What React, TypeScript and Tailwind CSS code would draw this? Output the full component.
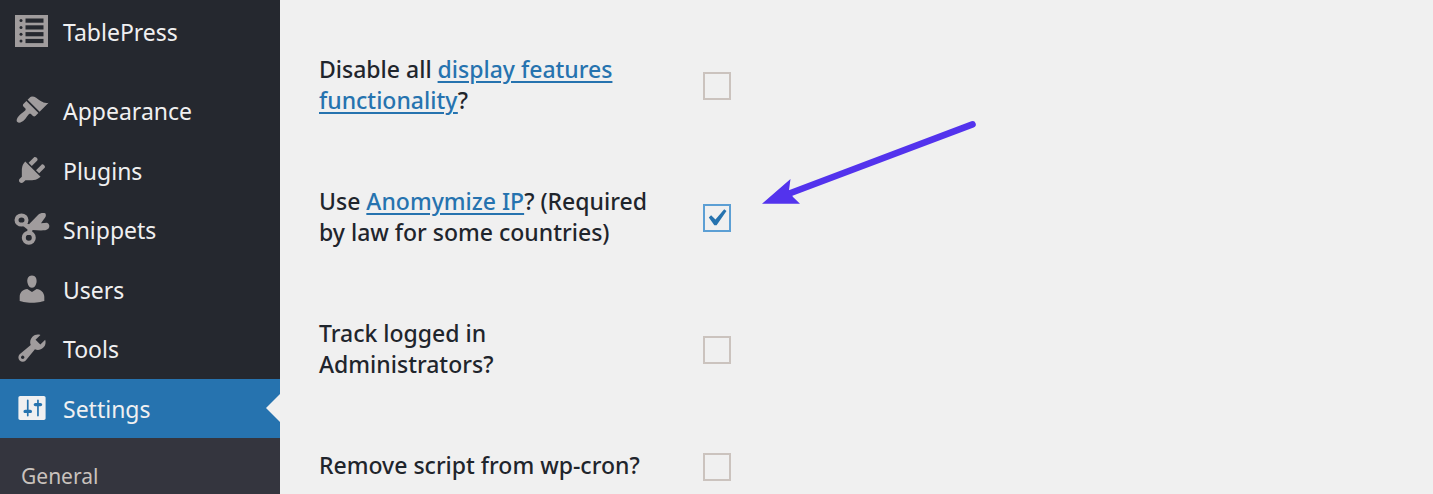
import { useState, type ReactNode } from "react";

function Dashicon({ d }: { d: string }) {
  return (
    <svg viewBox="0 0 20 20" className="size-[34px]" fill="currentColor" aria-hidden="true">
      <path d={d} />
    </svg>
  );
}

function TableIcon() {
  return (
    <svg viewBox="0 0 34 34" className="size-[34px]" aria-hidden="true">
      <rect x="0" y="1" width="33" height="32" fill="currentColor" />
      <g fill="#25282f">
        {[4.5, 11.3, 18.1, 24.9].map((y) => (
          <g key={y}>
            <circle cx="6" cy={y + 2.1} r="1.5" />
            <rect x="10.5" y={y} width="18" height="4.2" />
          </g>
        ))}
      </g>
    </svg>
  );
}

function ScissorsIcon() {
  return (
    <svg viewBox="0 0 36 34" className="h-[34px] w-9" aria-hidden="true">
      <g fill="none" stroke="currentColor" strokeWidth="4">
        <ellipse cx="7.500" cy="8" rx="5" ry="4.600" />
        <circle cx="14.800" cy="25.800" r="5" />
      </g>
      <path
        fill="currentColor"
        d="M10 10.500 15 12.300 24 3C26 1 29.500 .5 31.500 1.500 32.500 3.500 31.500 5.500 30 7L27 11.200 33 10.800C35.500 12 36 14.500 34.500 16.600 33 18.500 30 18.500 27 18.500L18.500 18 17.500 23 12.500 23 13.500 17.500 8.500 13.500Z"
      />
    </svg>
  );
}

const icons = {
  appearance:
    "M14.48 11.06L7.41 3.99l1.5-1.5c.5-.56 2.3-.47 3.51.32 1.21.8 1.43 1.28 2.91 2.1 1.18.64 2.45 1.26 4.45.85zm-.71.71L6.7 4.7 4.93 6.47c-.39.39-.39 1.02 0 1.41l1.06 1.06c.39.39.39 1.03 0 1.42-.6.6-1.43 1.11-2.21 1.69-.35.26-.7.53-1.01.84C1.43 14.23.4 16.08 1.4 17.07c.99 1 2.84-.03 4.18-1.36.31-.31.58-.66.85-1.02.57-.78 1.08-1.61 1.69-2.21.39-.39 1.02-.39 1.41 0l1.06 1.06c.39.39 1.02.39 1.41 0z",
  plugins:
    "M13.11 4.36L9.87 7.6 8 5.73l3.24-3.24c.35-.34 1.05-.2 1.56.32.52.51.66 1.21.31 1.55zm-8 1.77l.91-1.12 9.01 9.01-1.19.84c-.71.71-2.63 1.16-3.82 1.16H6.14L4.9 17.26c-.59.59-1.54.59-2.12 0-.59-.58-.59-1.53 0-2.12l1.24-1.24v-3.88c0-1.13.4-3.19 1.09-3.89zm7.26 3.97l3.24-3.24c.34-.35 1.04-.21 1.55.31.52.51.66 1.21.31 1.55l-3.24 3.25z",
  users:
    "M10 9.25c-2.27 0-2.73-3.44-2.73-3.44C7 4.02 7.82 2 9.97 2c2.16 0 2.98 2.02 2.71 3.81 0 0-.41 3.44-2.68 3.44zm0 2.57L12.72 10c2.39 0 4.52 2.33 4.52 4.53v2.49s-3.65 1.13-7.24 1.13c-3.65 0-7.24-1.13-7.24-1.13v-2.49c0-2.25 1.94-4.48 4.47-4.48z",
  tools:
    "M16.68 9.77c-1.34 1.34-3.3 1.67-4.95.99l-5.41 6.52c-.99.99-2.59.99-3.58 0s-.99-2.59 0-3.57l6.52-5.42c-.68-1.65-.35-3.61.99-4.95 1.28-1.28 3.12-1.62 4.72-1.06l-2.89 2.89 2.82 2.82 2.86-2.87c.53 1.58.18 3.39-1.08 4.65zM3.81 16.21c.4.39 1.04.39 1.43 0 .4-.4.4-1.04 0-1.43-.39-.4-1.03-.4-1.43 0-.39.39-.39 1.03 0 1.43z",
  settings:
    "M18 16V4c0-.55-.45-1-1-1H3c-.55 0-1 .45-1 1v12c0 .55.45 1 1 1h14c.55 0 1-.45 1-1zM8 11h1c.55 0 1 .45 1 1s-.45 1-1 1H8v1.5c0 .28-.22.5-.5.5s-.5-.22-.5-.5V13H6c-.55 0-1-.45-1-1s.45-1 1-1h1V5.5c0-.28.22-.5.5-.5s.5.22.5.5V11zm5-2h-1c-.55 0-1-.45-1-1s.45-1 1-1h1V5.5c0-.28.22-.5.5-.5s.5.22.5.5V7h1c.55 0 1 .45 1 1s-.45 1-1 1h-1v5.5c0 .28-.22.5-.5.5s-.5-.22-.5-.5V9z",
};

function MenuLink({ icon, label, current }: { icon: ReactNode; label: string; current?: boolean }) {
  return (
    <a
      href="#"
      aria-current={current ? "page" : undefined}
      className={
        current
          ? "relative flex h-full items-center bg-[#2673af] text-[#f0f0f1]"
          : "relative flex h-full items-center text-[#f0f0f1]"
      }
    >
      <span
        className={
          current
            ? "flex w-[63px] justify-center pb-px text-[#f0f0f1]"
            : "flex w-[63px] justify-center pb-px text-[#a09c9d]"
        }
      >
        {icon}
      </span>
      <span className="pt-0.5">{label}</span>
      {current && (
        <svg viewBox="0 0 14 28" className="absolute right-0 h-7 w-3.5" aria-hidden="true">
          <path d="M14 0 0 14 14 28Z" fill="#f0f0f0" />
        </svg>
      )}
    </a>
  );
}

function Arrow() {
  return (
    <svg
      viewBox="0 0 240 110"
      className="pointer-events-none absolute -top-[94px] left-[47px] h-[110px] w-[240px]"
      aria-hidden="true"
    >
      <path d="M222.500 14.300 38 84" stroke="#5333ed" strokeWidth="6.600" strokeLinecap="round" />
      <path d="M12 93.800 40.500 69 39 80 43 87 50 93.800Z" fill="#5333ed" />
    </svg>
  );
}

function OptionRow({
  id,
  children,
  defaultChecked = false,
  pointed = false,
}: {
  id: string;
  children: ReactNode;
  defaultChecked?: boolean;
  pointed?: boolean;
}) {
  const [checked, setChecked] = useState(defaultChecked);
  return (
    <div className="flex items-center py-[35px]">
      <label htmlFor={id} className="w-96 shrink-0 pr-9 font-medium">
        {children}
      </label>
      <span className="relative mt-0.5 size-7 shrink-0">
        <input
          id={id}
          type="checkbox"
          checked={checked}
          onChange={(e) => setChecked(e.target.checked)}
          className="block size-7 appearance-none border-2 border-[#cbc3be] checked:border-[#5c9fd4]"
        />
        {checked && (
          <svg
            viewBox="0 0 20 20"
            className="pointer-events-none absolute -top-[3px] -left-[4px] size-[34px]"
            aria-hidden="true"
          >
            <path
              d="M14.83 4.89l1.34.94-5.81 8.38H9.02L5.78 9.67l1.34-1.25 2.57 2.4z"
              fill="#2673af"
            />
          </svg>
        )}
        {pointed && <Arrow />}
      </span>
    </div>
  );
}

function TextLink({ children }: { children: ReactNode }) {
  return (
    <a href="#" className="text-[#2673af] underline decoration-2 underline-offset-3">
      {children}
    </a>
  );
}

export default function App() {
  return (
    <div className="flex h-screen overflow-hidden bg-[#f0f0f0] font-['Noto_Sans','Open_Sans',sans-serif] text-[23px] leading-[31px] text-[#1f252c]">
      <nav className="flex w-[280px] shrink-0 flex-col bg-[#25282f] pt-0.5">
        <div className="mb-5 h-[59px] shrink-0">
          <MenuLink icon={<TableIcon />} label="TablePress" />
        </div>
        <div className="grid h-[357px] shrink-0 grid-rows-6">
          <MenuLink icon={<Dashicon d={icons.appearance} />} label="Appearance" />
          <MenuLink icon={<Dashicon d={icons.plugins} />} label="Plugins" />
          <MenuLink icon={<ScissorsIcon />} label="Snippets" />
          <MenuLink icon={<Dashicon d={icons.users} />} label="Users" />
          <MenuLink icon={<Dashicon d={icons.tools} />} label="Tools" />
          <MenuLink icon={<Dashicon d={icons.settings} />} label="Settings" current />
        </div>
        <div className="grow bg-[#34353e] px-[21px] pt-[22px]">
          <a href="#" className="text-[21px] text-[#c9c2bd]">
            General
          </a>
        </div>
      </nav>
      <main className="min-w-0 grow pt-[19px] pl-[39px]">
        <OptionRow id="disable-display-features">
          Disable all <TextLink>display features functionality</TextLink>?
        </OptionRow>
        <OptionRow id="anonymize-ip" defaultChecked pointed>
          Use <TextLink>Anomymize IP</TextLink>? (Required by law for some countries)
        </OptionRow>
        <OptionRow id="track-admins">
          Track logged in
          <br />
          Administrators?
        </OptionRow>
        <OptionRow id="remove-wp-cron">Remove script from wp-cron?</OptionRow>
      </main>
    </div>
  );
}
